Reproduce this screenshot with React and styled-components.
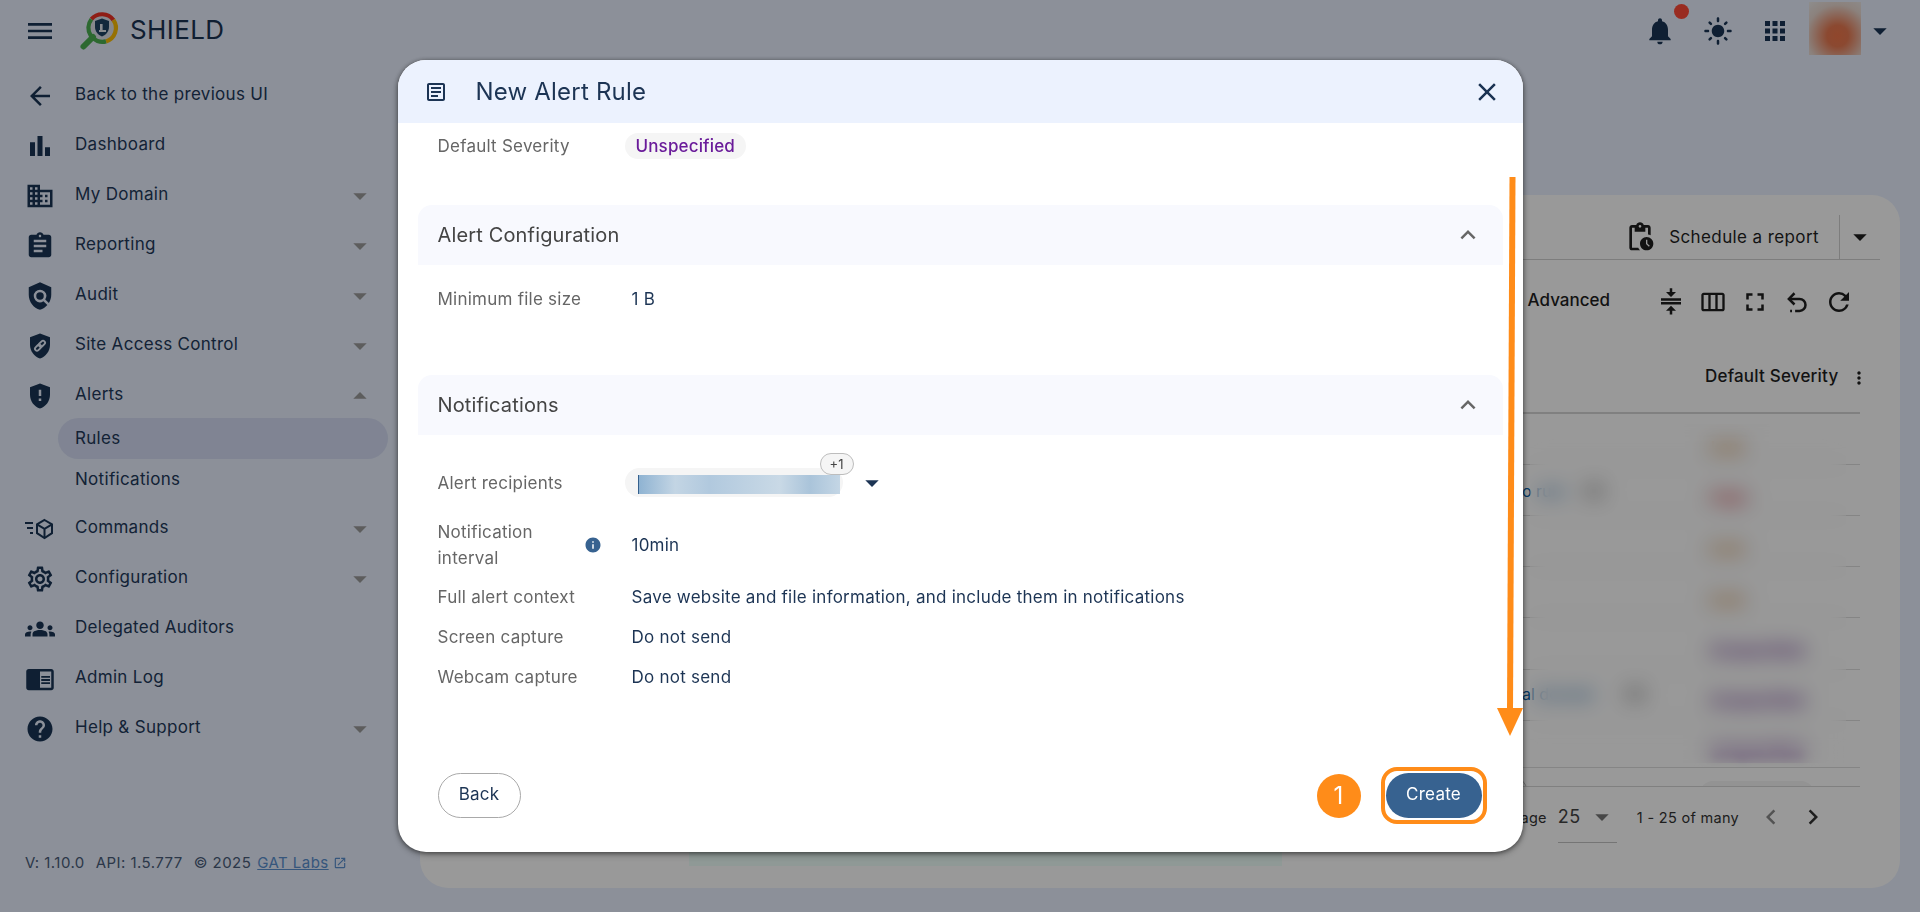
import React from 'react'
import styled, { createGlobalStyle } from 'styled-components'
import {
  MdMenu, MdArrowBack, MdBarChart, MdDomain, MdAssignment, MdPolicy, MdGppMaybe, MdOutlineSettings,
  MdGroups, MdChromeReaderMode, MdHelp, MdArrowDropDown, MdArrowDropUp, MdNotifications, MdLightMode,
  MdApps, MdOutlinePendingActions, MdCompress, MdOutlineViewWeek, MdFullscreen, MdRefresh, MdMoreVert,
  MdChevronLeft, MdChevronRight, MdOutlineArticle, MdClose, MdExpandLess, MdInfo, MdOutlineOpenInNew,
} from 'react-icons/md'

const NAVY = '#193555'
const ORANGE = '#ff8c19'
const BLUE = '#376290'

const GlobalStyle = createGlobalStyle`
  html, body, #root { margin: 0; height: 100%; }
  body { font-family: Inter, "Liberation Sans", sans-serif; background: #e9f0ff; overflow: hidden; }
`

const Page = styled.div`
  display: grid;
  grid-template-columns: 420px 1fr;
  grid-template-rows: 62px 1fr;
  height: 912px;
  background: #e9f0ff;
  color: ${NAVY};
`

const TopBar = styled.header`
  grid-column: 1 / 3;
  display: flex;
  align-items: center;
  padding: 0 24px 0 24px;
`

const IconButton = styled.span`
  display: inline-flex;
  flex: none;
  position: relative;
  margin-left: ${({ $gap }) => $gap || 0}px;
`

const LogoLink = styled.a`
  display: flex;
  align-items: center;
  margin-left: 22px;
  gap: 10px;
`

const Brand = styled.span`
  font-size: 26px;
  letter-spacing: 0.4px;
  color: #1c3454;
  margin-top: -4px;
`

const Spacer = styled.div`
  flex: 1;
`

const RedDot = styled.span`
  position: absolute;
  top: -11px;
  right: -13px;
  width: 15px;
  height: 15px;
  border-radius: 50%;
  background: #ff4a38;
`

const Avatar = styled.div`
  width: 52px;
  height: 53px;
  margin-left: 19px;
  margin-bottom: 5px;
  background: radial-gradient(circle at 55% 64%, #f0764a 0%, #e87a52 24%, #e8d8d0 70%, #ecebeb 100%);
`

const Sidebar = styled.nav`
  display: flex;
  flex-direction: column;
  padding-top: 9px;
`

const NavRow = styled.div`
  display: flex;
  align-items: center;
  height: 50px;
  padding: 0 44px 0 25px;
  flex: none;
  color: #22395a;
`

const NavIcon = styled.span`
  width: 30px;
  height: 30px;
  display: flex;
  align-items: center;
  justify-content: center;
  margin-right: 20px;
  color: ${NAVY};
  flex: none;
`

const NavLabel = styled.span`
  font-size: 17px;
  letter-spacing: 0.3px;
  flex: 1;
  margin-top: -4px;
`

const Caret = styled.span`
  display: flex;
  color: #9b9b9b;
`

const SubRow = styled.div`
  display: flex;
  align-items: center;
  height: 41px;
  margin-left: 58px;
  width: 330px;
  padding: 0 0 2px 17px;
  box-sizing: border-box;
  border-radius: 21px;
  font-size: 17px;
  letter-spacing: 0.3px;
  color: #22395a;
  background: ${({ $active }) => ($active ? '#d5ddf5' : 'transparent')};
`

const SubList = styled.div`
  margin: -3px 0 4px;
`

const VersionBar = styled.div`
  margin-top: auto;
  display: flex;
  align-items: center;
  gap: 11px;
  padding: 0 0 40px 25px;
  font-size: 15px;
  letter-spacing: 0.45px;
  color: #4a5d7a;
  white-space: nowrap;
`

const VersionLink = styled.a`
  color: #5a8fcf;
  display: inline-flex;
  align-items: center;
  gap: 4px;
  margin-left: -5px;
  span {
    text-decoration: underline;
  }
`

const Main = styled.main`
  padding: 133px 20px 24px 0;
  display: flex;
`

const Card = styled.section`
  position: relative;
  flex: 1;
  display: flex;
  flex-direction: column;
  box-sizing: border-box;
  padding: 20px 20px 0;
  background: #fff;
  border-radius: 28px;
  color: #1f1f1f;
  overflow: hidden;
`

const ReportBar = styled.div`
  display: flex;
  justify-content: flex-end;
  align-items: center;
  height: 45px;
  border-bottom: 1px solid #d0d0d0;
  box-sizing: border-box;
`

const ReportLabel = styled.span`
  font-size: 17px;
  letter-spacing: 0.4px;
  margin: 0 20px 0 13px;
`

const SplitCaret = styled.span`
  display: flex;
  align-items: center;
  height: 100%;
  padding: 0 4px;
  border-left: 1px solid #d0d0d0;
`

const ToolBar = styled.div`
  display: flex;
  justify-content: flex-end;
  align-items: center;
  gap: 12px;
  height: 80px;
  padding: 4px 26px 0 0;
  box-sizing: border-box;
`

const AdvancedLabel = styled.span`
  font-size: 17px;
  font-weight: 500;
  margin-right: 34px;
  margin-top: -4px;
`

const ColumnsIcon = styled(MdOutlineViewWeek)`
  margin: 0 1px;
`

const Table = styled.div`
  margin-right: 20px;
`

const rowColumns = `
  display: grid;
  grid-template-columns: 1075px 185px 1fr;
`

const HeadRow = styled.div`
  ${rowColumns}
  height: 74px;
  box-sizing: border-box;
  align-items: center;
  border-bottom: 2px solid #d5d5d5;
`

const HeadCell = styled.div`
  grid-column: 3;
  display: flex;
  align-items: center;
  padding-left: 5px;
  font-size: 17px;
  font-weight: 500;
  letter-spacing: 0.2px;
  white-space: nowrap;
`

const Kebab = styled.span`
  display: flex;
  margin: 4px -9px 0 auto;
`

const TableBody = styled.div`
  height: 373px;
  overflow: hidden;
  border-bottom: 1px solid #d5d5d5;
  box-sizing: border-box;
`

const BodyRow = styled.div`
  ${rowColumns}
  height: ${({ $height }) => $height}px;
  padding-top: ${({ $top }) => $top}px;
  box-sizing: border-box;
  border-bottom: 1px solid #dedede;
  overflow: hidden;
`

const NameCell = styled.div`
  grid-column: 2;
  display: flex;
  align-items: center;
  margin-left: 7px;
  margin-top: -6px;
  height: 26px;
  font-size: 16px;
  color: #0b5fa5;
  white-space: nowrap;
`

const MoreChip = styled.span`
  display: inline-block;
  width: 28px;
  height: 20px;
  margin-left: ${({ $gap }) => $gap}px;
  border-radius: 50%;
  background: #d0d0d0;
`

const RoundCount = styled.span`
  grid-column: 2;
  width: 26px;
  height: 26px;
  box-sizing: border-box;
  margin-left: -14px;
  margin-top: -4px;
  border: 1px solid #bbb;
  border-radius: 50%;
`

const SeverityChip = styled.span`
  grid-column: 3;
  justify-self: start;
  padding: 0 11px;
  height: 26px;
  line-height: 26px;
  border-radius: 13px;
  background: #f5f5f5;
  font-size: 16px;
  font-weight: 500;
  color: ${({ $color }) => $color};
  filter: ${({ $soft }) => ($soft ? 'blur(4px)' : 'none')};
`

const PrivacyBlur = styled.div`
  position: absolute;
  left: 1110px;
  top: 229px;
  width: 316px;
  height: 339px;
  backdrop-filter: blur(10px);
`

const Toast = styled.div`
  position: absolute;
  left: 269px;
  bottom: 22px;
  width: 593px;
  height: 60px;
  background: #eefffa;
`

const TableFooter = styled.div`
  display: flex;
  justify-content: flex-end;
  align-items: center;
  padding: 4px 12px 0 0;
  margin-right: 20px;
`

const FooterText = styled.span`
  font-size: 14.5px;
  letter-spacing: 0.3px;
  color: #333;
`

const PageSelect = styled.div`
  display: flex;
  align-items: center;
  justify-content: space-between;
  box-sizing: border-box;
  width: 59px;
  height: 52px;
  margin: 0 20px 0 11px;
  border-bottom: 1px solid #c4c4c4;
  font-size: 18px;
  letter-spacing: 0.5px;
  color: #444;
  svg {
    flex: none;
    margin-right: -1px;
  }
`

const Pager = styled.span`
  display: flex;
  gap: 12px;
  margin-left: 17px;
`

const PagerIcon = styled.span`
  display: flex;
  color: ${({ $disabled }) => ($disabled ? '#8a8a8a' : '#333')};
`

const Overlay = styled.div`
  position: fixed;
  inset: 0;
  display: flex;
  align-items: center;
  justify-content: center;
  background: rgba(0, 0, 0, 0.4);
`

const Modal = styled.div`
  position: relative;
  display: flex;
  flex-direction: column;
  width: 1125px;
  height: 792px;
  background: #fff;
  border-radius: 28px;
  overflow: hidden;
  color: #1c3454;
  box-shadow: 0 1px 5px rgba(0, 0, 0, 0.55), 0 3px 8px rgba(0, 0, 0, 0.2);
`

const ModalHeader = styled.div`
  display: flex;
  align-items: center;
  height: 63px;
  flex: none;
  padding: 0 21px 0 26px;
  background: #ecf2fe;
`

const ModalTitle = styled.h2`
  flex: 1;
  margin: 0 0 0 28px;
  font-size: 24px;
  font-weight: 400;
  letter-spacing: 0.2px;
  color: #1c3454;
`

const ModalBody = styled.div`
  flex: 1;
  padding-top: 3px;
  overflow: hidden;
`

const FieldRow = styled.div`
  display: flex;
  align-items: center;
  box-sizing: border-box;
  height: ${({ $height }) => $height || 40}px;
  margin: 0 40px;
`

const FieldLabel = styled.div`
  display: flex;
  align-items: center;
  flex: none;
  width: 194px;
  font-size: 17px;
  line-height: 26px;
  letter-spacing: 0.24px;
  color: #666;
`

const WrappedText = styled.span`
  width: 120px;
  margin-right: 26px;
`

const FieldValue = styled.div`
  font-size: 17px;
  letter-spacing: 0.24px;
  color: #1c3454;
`

const SeverityPill = styled.span`
  display: inline-block;
  margin-left: -7px;
  padding: 0 11px;
  height: 26px;
  line-height: 26px;
  border-radius: 13px;
  background: #f5f5f5;
  font-size: 17px;
  font-weight: 500;
  letter-spacing: 0.15px;
  color: #6a1b9a;
`

const SectionHead = styled.div`
  display: flex;
  align-items: center;
  justify-content: space-between;
  height: 60px;
  margin: ${({ $top }) => $top}px 20px ${({ $bottom }) => $bottom}px;
  padding: 0 20px;
  border-radius: 14px 14px 0 0;
  background: #f8f9fe;
  font-size: 20px;
  letter-spacing: 0.15px;
  color: #444;
  svg {
    color: #666;
  }
`

const RecipientChip = styled.div`
  position: relative;
  width: 218px;
  height: 29px;
  margin-left: -7px;
  padding: 7px 3px 3px 13px;
  box-sizing: border-box;
  border-radius: 15px;
  background: #f5f5f5;
`

const RedactedName = styled.div`
  height: 19px;
  border-left: 1px solid #35608d;
  background: linear-gradient(90deg, #8fb3d2 0%, #c3d5e4 18%, #b1c9de 35%, #c9d9e6 70%, #aac4da 85%, #c4d6e5 100%);
`

const CountBadge = styled.span`
  position: absolute;
  top: -15px;
  right: -11px;
  width: 34px;
  height: 22px;
  box-sizing: border-box;
  line-height: 20px;
  text-align: center;
  border: 1px solid #bdbdbd;
  border-radius: 11px;
  background: #f5f5f5;
  font-size: 13px;
  color: #444;
`

const RecipientCaret = styled.span`
  display: flex;
  margin-left: 13px;
  color: #1c3454;
`

const ModalFooter = styled.div`
  display: flex;
  align-items: center;
  flex: none;
  padding: 0 36px 28px 40px;
`

const BackButton = styled.button`
  width: 83px;
  height: 45px;
  padding: 0 0 4px;
  border: 1px solid #a9a9a9;
  border-radius: 23px;
  background: #fff;
  font-family: inherit;
  font-size: 17px;
  letter-spacing: 0.24px;
  color: #1c3454;
`

const StepBadge = styled.span`
  width: 44px;
  height: 44px;
  margin-left: auto;
  margin-right: 20px;
  border-radius: 50%;
  background: ${ORANGE};
  color: #fff;
  font-size: 24px;
  line-height: 44px;
  text-align: center;
`

const CreateRing = styled.div`
  display: flex;
  padding: 2px 1px;
  border: 4px solid ${ORANGE};
  border-radius: 16px;
`

const CreateButton = styled.button`
  width: 96px;
  height: 45px;
  padding: 0 0 4px;
  border: 0;
  border-radius: 23px;
  background: ${BLUE};
  color: #fff;
  font-family: inherit;
  font-size: 17px;
  letter-spacing: 0.24px;
`

const ScrollArrow = styled.svg`
  position: absolute;
  right: 0;
  top: 116px;
  width: 26px;
  height: 562px;
`

const ShieldLinkIcon = () => (
  <svg width="32" height="32" viewBox="0 0 24 24">
    <path fill={NAVY} d="M12 2 4 5v6c0 5 3.4 9.6 8 11 4.6-1.4 8-6 8-11V5z" />
    <g transform="rotate(-45 12 11.8)" fill="none" stroke="#e9f0ff" strokeWidth="1.5">
      <rect x="7" y="10.2" width="5.6" height="3.2" rx="1.6" />
      <rect x="11.4" y="10.2" width="5.6" height="3.2" rx="1.6" />
    </g>
  </svg>
)

const CommandsIcon = () => (
  <svg width="30" height="24" viewBox="0 0 30 24" fill="none" stroke={NAVY} strokeWidth="2">
    <path d="M0 6h8M2 11h6M5 16h3" />
    <path d="M19.5 3l7.5 4.3v8.8L19.5 21 12 16.1V7.3z" />
    <path d="M12 7.3l7.5 4.5L27 7.3M19.5 11.8V21" />
  </svg>
)

const UndoDotsIcon = () => (
  <svg width="30" height="30" viewBox="0 0 24 24" fill="none" stroke="currentColor" strokeWidth="2">
    <path d="M5.5 9.5H14a4.8 4.8 0 0 1 0 9.6h-3.5" />
    <path d="M10 5 5.5 9.5 10 14" />
    <path d="M6.5 19.1h1.5" />
  </svg>
)

const ShieldLogo = () => (
  <svg width="42" height="42" viewBox="0 0 42 42">
    <circle cx="24" cy="18" r="13.5" fill="#dfe3ec" />
    <path d="M13.4 9.2A14 14 0 0 1 35.4 10" fill="none" stroke="#ee3124" strokeWidth="4.2" />
    <path d="M35.4 10A14 14 0 0 1 28 31.4" fill="none" stroke="#fbbc05" strokeWidth="4.2" />
    <path d="M28 31.4A14 14 0 0 1 13.4 9.2" fill="none" stroke="#4caf50" strokeWidth="4.2" />
    <path d="M15 27 5.5 36.5" stroke="#4caf50" strokeWidth="6" strokeLinecap="round" />
    <path fill="#1f4365" d="M24 8.5l-7 2.6v5.7c0 4.5 3 8.3 7 9.6 4-1.3 7-5.1 7-9.6v-5.7z" />
    <path fill="#e3e8ef" d="M22 14h2.6v6H28v2h-7v-2h1z" />
  </svg>
)

const navItems = [
  { label: 'Back to the previous UI', icon: <MdArrowBack size={30} /> },
  { label: 'Dashboard', icon: <MdBarChart size={40} /> },
  { label: 'My Domain', icon: <MdDomain size={30} />, menu: true },
  { label: 'Reporting', icon: <MdAssignment size={30} />, menu: true },
  { label: 'Audit', icon: <MdPolicy size={32} />, menu: true },
  { label: 'Site Access Control', icon: <ShieldLinkIcon />, menu: true },
  {
    label: 'Alerts',
    icon: <MdGppMaybe size={32} />,
    menu: true,
    open: true,
    children: [{ label: 'Rules', active: true }, { label: 'Notifications' }],
  },
  { label: 'Commands', icon: <CommandsIcon />, menu: true },
  { label: 'Configuration', icon: <MdOutlineSettings size={30} />, menu: true },
  { label: 'Delegated Auditors', icon: <MdGroups size={30} /> },
  { label: 'Admin Log', icon: <MdChromeReaderMode size={30} /> },
  { label: 'Help & Support', icon: <MdHelp size={30} />, menu: true },
]

const severityRows = [
  { text: 'Low', color: '#ed8a1a', height: 51, top: 20 },
  { text: 'High', color: '#e53946', height: 51, top: 19, name: 'o rule', gap: 15 },
  { text: 'Low', color: '#ed8a1a', height: 51, top: 19 },
  { text: 'Low', color: '#ed8a1a', height: 51, top: 19 },
  { text: 'Unspecified', color: '#6a1b9a', height: 52, top: 19 },
  { text: 'Unspecified', color: '#6a1b9a', height: 51, top: 17, name: 'al domain', gap: 26 },
  { text: 'Unspecified', color: '#6a1b9a', height: 47, top: 16, soft: true },
  { text: 'Unspecified', color: '#6a1b9a', height: 19, top: 13, count: true },
]

const App = () => (
  <>
    <GlobalStyle />
    <Page>
      <TopBar>
        <IconButton>
          <MdMenu size={32} />
        </IconButton>
        <LogoLink>
          <ShieldLogo />
          <Brand>SHIELD</Brand>
        </LogoLink>
        <Spacer />
        <IconButton>
          <MdNotifications size={32} />
          <RedDot />
        </IconButton>
        <IconButton $gap={27}>
          <MdLightMode size={30} />
        </IconButton>
        <IconButton $gap={27}>
          <MdApps size={30} />
        </IconButton>
        <Avatar />
        <IconButton $gap={3}>
          <MdArrowDropDown size={32} />
        </IconButton>
      </TopBar>
      <Sidebar>
        {navItems.map((item) => (
          <React.Fragment key={item.label}>
            <NavRow>
              <NavIcon>{item.icon}</NavIcon>
              <NavLabel>{item.label}</NavLabel>
              {item.menu && <Caret>{item.open ? <MdArrowDropUp size={32} /> : <MdArrowDropDown size={32} />}</Caret>}
            </NavRow>
            {item.children && (
              <SubList>
                {item.children.map((child) => (
                  <SubRow key={child.label} $active={child.active}>
                    {child.label}
                  </SubRow>
                ))}
              </SubList>
            )}
          </React.Fragment>
        ))}
        <VersionBar>
          <span>V: 1.10.0</span>
          <span>API: 1.5.777</span>
          <span>© 2025</span>
          <VersionLink>
            <span>GAT Labs</span>
            <MdOutlineOpenInNew size={14} />
          </VersionLink>
        </VersionBar>
      </Sidebar>
      <Main>
        <Card>
          <ReportBar>
            <MdOutlinePendingActions size={32} />
            <ReportLabel>Schedule a report</ReportLabel>
            <SplitCaret>
              <MdArrowDropDown size={32} />
            </SplitCaret>
          </ReportBar>
          <ToolBar>
            <AdvancedLabel>Advanced</AdvancedLabel>
            <MdCompress size={30} />
            <ColumnsIcon size={28} />
            <MdFullscreen size={30} />
            <UndoDotsIcon />
            <MdRefresh size={30} />
          </ToolBar>
          <Table>
            <HeadRow>
              <HeadCell>
                Default Severity
                <Kebab>
                  <MdMoreVert size={20} />
                </Kebab>
              </HeadCell>
            </HeadRow>
            <TableBody>
              {severityRows.map((row, i) => (
                <BodyRow key={i} $height={row.height} $top={row.top}>
                  {row.name && (
                    <NameCell>
                      {row.name}
                      <MoreChip $gap={row.gap} />
                    </NameCell>
                  )}
                  {row.count && <RoundCount />}
                  <SeverityChip $color={row.color} $soft={row.soft}>
                    {row.text}
                  </SeverityChip>
                </BodyRow>
              ))}
            </TableBody>
            <TableFooter>
              <FooterText>Rows per page</FooterText>
              <PageSelect>
                25
                <MdArrowDropDown size={32} color="#777" />
              </PageSelect>
              <FooterText>1 - 25 of many</FooterText>
              <Pager>
                <PagerIcon $disabled>
                  <MdChevronLeft size={30} />
                </PagerIcon>
                <PagerIcon>
                  <MdChevronRight size={30} />
                </PagerIcon>
              </Pager>
            </TableFooter>
          </Table>
          <PrivacyBlur />
          <Toast />
        </Card>
      </Main>
    </Page>
    <Overlay>
      <Modal>
        <ModalHeader>
          <MdOutlineArticle size={24} />
          <ModalTitle>New Alert Rule</ModalTitle>
          <MdClose size={30} />
        </ModalHeader>
        <ModalBody>
          <FieldRow>
            <FieldLabel>Default Severity</FieldLabel>
            <FieldValue>
              <SeverityPill>Unspecified</SeverityPill>
            </FieldValue>
          </FieldRow>
          <SectionHead $top={39} $bottom={14}>
            Alert Configuration
            <MdExpandLess size={30} />
          </SectionHead>
          <FieldRow>
            <FieldLabel>Minimum file size</FieldLabel>
            <FieldValue>1 B</FieldValue>
          </FieldRow>
          <SectionHead $top={56} $bottom={17}>
            Notifications
            <MdExpandLess size={30} />
          </SectionHead>
          <FieldRow $height={61}>
            <FieldLabel>Alert recipients</FieldLabel>
            <RecipientChip>
              <RedactedName />
              <CountBadge>+1</CountBadge>
            </RecipientChip>
            <RecipientCaret>
              <MdArrowDropDown size={32} />
            </RecipientCaret>
          </FieldRow>
          <FieldRow $height={64}>
            <FieldLabel>
              <WrappedText>Notification interval</WrappedText>
              <MdInfo size={18} color={BLUE} />
            </FieldLabel>
            <FieldValue>10min</FieldValue>
          </FieldRow>
          <FieldRow>
            <FieldLabel>Full alert context</FieldLabel>
            <FieldValue>Save website and file information, and include them in notifications</FieldValue>
          </FieldRow>
          <FieldRow>
            <FieldLabel>Screen capture</FieldLabel>
            <FieldValue>Do not send</FieldValue>
          </FieldRow>
          <FieldRow>
            <FieldLabel>Webcam capture</FieldLabel>
            <FieldValue>Do not send</FieldValue>
          </FieldRow>
        </ModalBody>
        <ModalFooter>
          <BackButton>Back</BackButton>
          <StepBadge>1</StepBadge>
          <CreateRing>
            <CreateButton>Create</CreateButton>
          </CreateRing>
        </ModalFooter>
        <ScrollArrow viewBox="0 0 26 562">
          <path d="M15.5 1 13 535" fill="none" stroke={ORANGE} strokeWidth="6" />
          <path d="M0 532h26l-13 28z" fill={ORANGE} />
        </ScrollArrow>
      </Modal>
    </Overlay>
  </>
)

export default App
